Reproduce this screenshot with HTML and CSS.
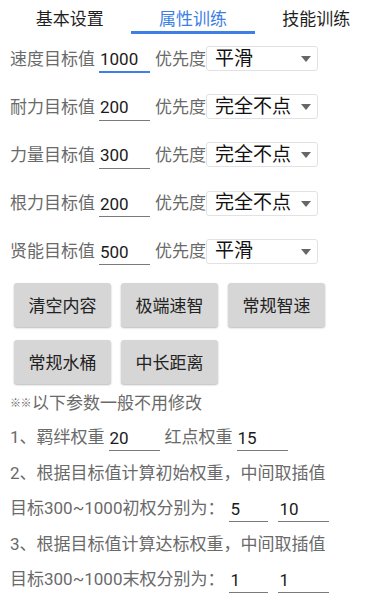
FILE: index.html
```html
<!DOCTYPE html>
<html lang="zh-CN">
<head>
<meta charset="utf-8">
<link rel="stylesheet" href="styles.css">
</head>
<body>
<div class="tabs">
  <div class="tab">基本设置</div>
  <div class="tab active">属性训练</div>
  <div class="tab">技能训练</div>
</div>

<div class="form">
  <div class="row">
    <span class="label">速度目标值</span>
    <input class="num focus" value="1000">
    <span class="label pri">优先度</span>
    <div class="select"><span class="sel-text">平滑</span><svg class="arrow" width="10" height="6" viewBox="0 0 10 6"><path d="M0 0H10L5 6Z" fill="#666"/></svg></div>
  </div>
  <div class="row">
    <span class="label">耐力目标值</span>
    <input class="num" value="200">
    <span class="label pri">优先度</span>
    <div class="select"><span class="sel-text">完全不点</span><svg class="arrow" width="10" height="6" viewBox="0 0 10 6"><path d="M0 0H10L5 6Z" fill="#666"/></svg></div>
  </div>
  <div class="row">
    <span class="label">力量目标值</span>
    <input class="num" value="300">
    <span class="label pri">优先度</span>
    <div class="select"><span class="sel-text">完全不点</span><svg class="arrow" width="10" height="6" viewBox="0 0 10 6"><path d="M0 0H10L5 6Z" fill="#666"/></svg></div>
  </div>
  <div class="row">
    <span class="label">根力目标值</span>
    <input class="num" value="200">
    <span class="label pri">优先度</span>
    <div class="select"><span class="sel-text">完全不点</span><svg class="arrow" width="10" height="6" viewBox="0 0 10 6"><path d="M0 0H10L5 6Z" fill="#666"/></svg></div>
  </div>
  <div class="row">
    <span class="label">贤能目标值</span>
    <input class="num" value="500">
    <span class="label pri">优先度</span>
    <div class="select"><span class="sel-text">平滑</span><svg class="arrow" width="10" height="6" viewBox="0 0 10 6"><path d="M0 0H10L5 6Z" fill="#666"/></svg></div>
  </div>
</div>

<div class="buttons">
  <div class="btn">清空内容</div>
  <div class="btn">极端速智</div>
  <div class="btn">常规智速</div>
  <div class="btn">常规水桶</div>
  <div class="btn">中长距离</div>
</div>

<div class="params">
  <div class="line note"><span class="stars">※※</span>以下参数一般不用修改</div>
  <div class="line">
    <span class="label">1、羁绊权重</span>
    <input class="num" value="20">
    <span class="label gap">红点权重</span>
    <input class="num" value="15">
  </div>
  <div class="line"><span class="label">2、根据目标值计算初始权重，中间取插值</span></div>
  <div class="line">
    <span class="label">目标300~1000初权分别为：</span>
    <input class="num short" value="5">
    <input class="num mid" value="10">
  </div>
  <div class="line"><span class="label">3、根据目标值计算达标权重，中间取插值</span></div>
  <div class="line">
    <span class="label">目标300~1000末权分别为：</span>
    <input class="num short" value="1">
    <input class="num mid" value="1">
  </div>
</div>
</body>
</html>
```

FILE: styles.css
```css
* { box-sizing: border-box; }

body {
  margin: 0;
  background: #ffffff;
  font-family: Roboto, "Noto Sans CJK SC", sans-serif;
  font-size: 17px;
  color: #222222;
}

.tabs {
  display: flex;
  margin: 0 2px 0 8px;
}

.tab {
  flex: 1;
  text-align: center;
  padding-top: 8px;
  padding-bottom: 1px;
  line-height: 22px;
  border-bottom: 3px solid transparent;
  color: #1f1f1f;
}

.tab.active {
  color: #3d7fe6;
  border-bottom-color: #3d7fe6;
}

.form {
  padding: 12px 0 0 10px;
}

.row {
  display: flex;
  align-items: center;
  height: 25px;
  margin-bottom: 23.2px;
}

.label {
  color: #6a6a6a;
  white-space: nowrap;
  line-height: 24px;
}

.num {
  font-family: Roboto, "Noto Sans CJK SC", sans-serif;
  font-size: 17px;
  color: #1a1a1a;
  width: 51px;
  height: 28px;
  margin: 0 0 0 4px;
  padding: 2px 0 0 1px;
  border: none;
  border-bottom: 1px solid #7a7a7a;
  background: transparent;
  outline: none;
}

.num.focus {
  border-bottom: 2px solid #3d7fe6;
}

.pri {
  margin-left: 5px;
}

.select {
  display: flex;
  align-items: center;
  justify-content: space-between;
  width: 112px;
  height: 25px;
  margin-left: 0;
  padding: 0 6px 0 8px;
  background: #ffffff;
  border: 1px solid #e2e2e2;
  border-radius: 3px;
}

.sel-text {
  font-size: 19px;
  color: #111111;
  line-height: 24px;
}

.arrow {
  display: block;
  margin-top: 1px;
}

.buttons {
  display: flex;
  flex-wrap: wrap;
  column-gap: 10px;
  row-gap: 13px;
  padding: 0 0 0 14px;
  margin-top: -4px;
}

.btn {
  width: 97px;
  height: 44px;
  display: flex;
  align-items: center;
  justify-content: center;
  background: #d6d6d6;
  border-radius: 3px;
  box-shadow: 0 1px 2px rgba(0, 0, 0, 0.28);
  color: #222222;
}

.params {
  padding-left: 10px;
}

.line {
  display: flex;
  align-items: center;
  height: 35.5px;
}

.note {
  color: #6a6a6a;
}

.stars {
  font-size: 11px;
  letter-spacing: -0.5px;
  margin-right: 1px;
}

.gap {
  margin-left: 5px;
}

.num.short {
  width: 39px;
  margin-left: 5px;
}

.num.mid {
  width: 51px;
  margin-left: 10px;
}
```
